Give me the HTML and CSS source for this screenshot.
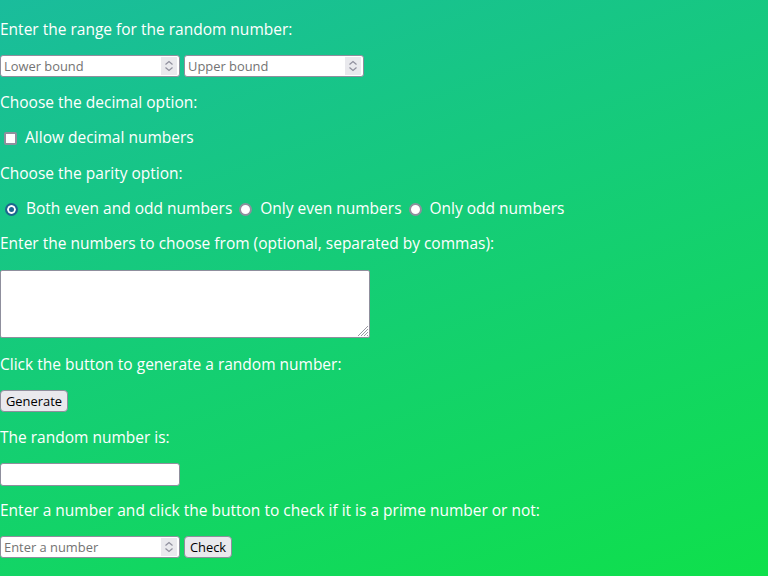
FILE: index.html
```html
<!DOCTYPE html>
<html lang="en">
<head>
<meta charset="utf-8">
<title>Random Number Generator</title>
<link rel="stylesheet" href="styles.css">
</head>
<body>
<main class="page">
  <p class="label first">Enter the range for the random number:</p>
  <div class="controls top">
    <span class="num">
      <input type="number" class="num-field" placeholder="Lower bound">
      <span class="spin"><svg width="16" height="18" viewBox="0 0 16 18"><path d="M4.5 7.5 L8 4.5 L11.5 7.5 M4.5 10.5 L8 13.5 L11.5 10.5" fill="none" stroke="#8f8f9d" stroke-width="1.2"/></svg></span>
    </span>
    <span class="num">
      <input type="number" class="num-field" placeholder="Upper bound">
      <span class="spin"><svg width="16" height="18" viewBox="0 0 16 18"><path d="M4.5 7.5 L8 4.5 L11.5 7.5 M4.5 10.5 L8 13.5 L11.5 10.5" fill="none" stroke="#8f8f9d" stroke-width="1.2"/></svg></span>
    </span>
  </div>

  <p class="label">Choose the decimal option:</p>
  <div class="choice-row">
    <label class="choice"><input type="checkbox" class="check"><span>Allow decimal numbers</span></label>
  </div>

  <p class="label loose">Choose the parity option:</p>
  <div class="choice-row">
    <label class="choice"><input type="radio" name="parity" class="radio" checked><span>Both even and odd numbers</span></label>
    <label class="choice"><input type="radio" name="parity" class="radio"><span>Only even numbers</span></label>
    <label class="choice"><input type="radio" name="parity" class="radio"><span>Only odd numbers</span></label>
  </div>

  <p class="label">Enter the numbers to choose from (optional, separated by commas):</p>
  <div class="area-wrap">
    <textarea class="list"></textarea>
    <svg class="grip" width="11" height="11" viewBox="0 0 11 11"><path d="M1 11 L11 1 M4 11 L11 4 M7 11 L11 7 M10 11 L11 10" stroke="#9a9aa4" stroke-width="1" fill="none"/></svg>
  </div>

  <p class="label loose">Click the button to generate a random number:</p>
  <button class="btn btn-generate" type="button">Generate</button>

  <p class="label">The random number is:</p>
  <input type="text" class="result" readonly>

  <p class="label tight">Enter a number and click the button to check if it is a prime number or not:</p>
  <div class="controls last">
    <span class="num">
      <input type="number" class="num-field" placeholder="Enter a number">
      <span class="spin"><svg width="16" height="18" viewBox="0 0 16 18"><path d="M4.5 7.5 L8 4.5 L11.5 7.5 M4.5 10.5 L8 13.5 L11.5 10.5" fill="none" stroke="#8f8f9d" stroke-width="1.2"/></svg></span>
    </span>
    <button class="btn btn-check" type="button">Check</button>
  </div>
</main>
</body>
</html>
```

FILE: styles.css
```css
html, body {
  margin: 0;
  padding: 0;
}

body {
  min-height: 100vh;
  background: linear-gradient(160deg, #1abc9c 0%, #0fe04b 100%);
  color: #ffffff;
  font-family: "Open Sans", "Noto Sans", sans-serif;
  font-size: 15.5px;
}

.page {
  display: flex;
  flex-direction: column;
  align-items: flex-start;
  padding-top: 20px;
}

.label {
  margin: 16px 0 0;
  line-height: 19px;
}

.label.first {
  margin-top: 0;
}

.label.tight {
  margin-top: 15px;
}

.label.loose {
  margin-top: 17px;
}

.controls {
  display: flex;
  gap: 4px;
  margin-top: 16px;
}

.controls.last {
  margin-top: 16px;
}

.num {
  display: flex;
  align-items: stretch;
  box-sizing: border-box;
  width: 180px;
  height: 22px;
  padding: 1px 2px 1px 1px;
  border: 1px solid #8f8f9d;
  border-radius: 3px;
  background: #ffffff;
}

.num-field {
  flex: 1;
  min-width: 0;
  border: 0;
  outline: none;
  padding: 0 0 0 2px;
  margin: 0;
  background: transparent;
  font-family: "Open Sans", "Noto Sans", sans-serif;
  font-size: 12.9px;
  color: #000;
  -moz-appearance: textfield;
}

.num-field::-webkit-inner-spin-button,
.num-field::-webkit-outer-spin-button {
  -webkit-appearance: none;
  margin: 0;
}

.num-field::placeholder {
  color: #737373;
}

.spin {
  display: block;
  width: 16px;
  background: #e9e9ed;
}

.spin svg {
  display: block;
}

.choice-row {
  display: flex;
  align-items: center;
  gap: 2px;
  margin-top: 16px;
  line-height: 19px;
}

.choice {
  display: flex;
  align-items: center;
}

.check,
.radio {
  -webkit-appearance: none;
  appearance: none;
  box-sizing: border-box;
  width: 13px;
  height: 13px;
  margin: 1px 8px 0 5px;
  border: 2px solid #8f8f9d;
  background: #ffffff;
}

.check {
  margin-left: 4px;
  border-radius: 2px;
}

.radio {
  border-radius: 50%;
}

.radio:checked {
  border-color: #1d6690;
  background: #1d6690;
  box-shadow: inset 0 0 0 2px #ffffff;
}

.area-wrap {
  position: relative;
  margin-top: 17px;
  line-height: 0;
}

.list {
  display: block;
  box-sizing: border-box;
  width: 370px;
  height: 68px;
  margin: 0;
  border: 1px solid #8f8f9d;
  border-radius: 2px;
  background: #ffffff;
  resize: none;
}

.grip {
  position: absolute;
  right: 2px;
  bottom: 2px;
}

.btn {
  box-sizing: border-box;
  height: 22px;
  margin: 0;
  padding: 0;
  border: 1px solid #8f8f9d;
  border-radius: 4px;
  background: #e9e9ed;
  color: #000000;
  font-family: "Open Sans", "Noto Sans", sans-serif;
  font-size: 12.9px;
  line-height: 18px;
}

.btn-generate {
  width: 68px;
  margin-top: 16px;
}

.btn-check {
  width: 48px;
}

.result {
  box-sizing: border-box;
  width: 180px;
  height: 23px;
  margin: 16px 0 0;
  border: 1px solid #8f8f9d;
  border-radius: 3px;
  background: #ffffff;
}
```
